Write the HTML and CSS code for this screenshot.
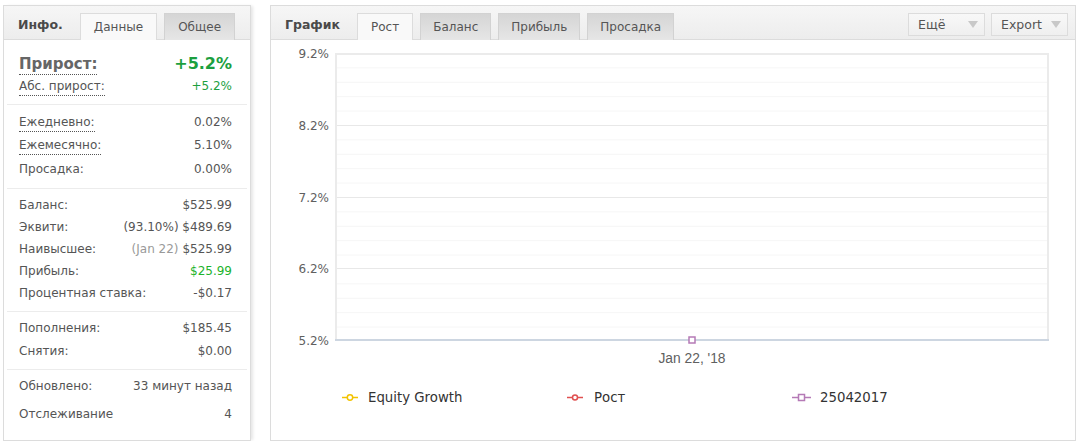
FILE: index.html
```html
<!DOCTYPE html>
<html lang="ru">
<head>
<meta charset="utf-8">
<link rel="stylesheet" href="styles.css">
</head>
<body>
<div class="page">
  <section class="panel info">
    <div class="head">
      <span class="title">Инфо.</span>
      <span class="tab active">Данные</span>
      <span class="tab">Общее</span>
    </div>
    <div class="group first">
      <div class="row big"><span class="lbl dotted">Прирост:</span><span class="val green">+5.2%</span></div>
      <div class="row"><span class="lbl dotted">Абс. прирост:</span><span class="val green">+5.2%</span></div>
    </div>
    <div class="group loose">
      <div class="row"><span class="lbl dotted">Ежедневно:</span><span class="val">0.02%</span></div>
      <div class="row"><span class="lbl dotted">Ежемесячно:</span><span class="val">5.10%</span></div>
      <div class="row"><span class="lbl">Просадка:</span><span class="val">0.00%</span></div>
    </div>
    <div class="group">
      <div class="row"><span class="lbl">Баланс:</span><span class="val">$525.99</span></div>
      <div class="row"><span class="lbl">Эквити:</span><span class="val">(93.10%) $489.69</span></div>
      <div class="row"><span class="lbl">Наивысшее:</span><span class="val"><span class="muted">(Jan 22)</span> $525.99</span></div>
      <div class="row"><span class="lbl">Прибыль:</span><span class="val green2">$25.99</span></div>
      <div class="row"><span class="lbl">Процентная ставка:</span><span class="val">-$0.17</span></div>
    </div>
    <div class="group pair">
      <div class="row"><span class="lbl">Пополнения:</span><span class="val">$185.45</span></div>
      <div class="row"><span class="lbl">Снятия:</span><span class="val">$0.00</span></div>
    </div>
    <div class="group last">
      <div class="row"><span class="lbl">Обновлено:</span><span class="val">33 минут назад</span></div>
      <div class="row tall"><span class="lbl">Отслеживание</span><span class="val">4</span></div>
    </div>
  </section>

  <section class="panel chart">
    <div class="head">
      <span class="title">График</span>
      <span class="tab active">Рост</span>
      <span class="tab">Баланс</span>
      <span class="tab">Прибыль</span>
      <span class="tab">Просадка</span>
      <span class="spacer"></span>
      <span class="btn">Ещё <i class="caret"></i></span>
      <span class="btn">Export <i class="caret"></i></span>
    </div>
    <svg class="plot" width="803" height="399" viewBox="0 0 803 399">
      <rect x="64" y="13" width="713" height="287" fill="#fff"/>
      <g stroke="#f6f6f6" stroke-width="1">
        <line x1="65" x2="776" y1="27.9" y2="27.9"/>
        <line x1="65" x2="776" y1="42.3" y2="42.3"/>
        <line x1="65" x2="776" y1="56.7" y2="56.7"/>
        <line x1="65" x2="776" y1="71.1" y2="71.1"/>
        <line x1="65" x2="776" y1="99.9" y2="99.9"/>
        <line x1="65" x2="776" y1="114.3" y2="114.3"/>
        <line x1="65" x2="776" y1="128.7" y2="128.7"/>
        <line x1="65" x2="776" y1="143.1" y2="143.1"/>
        <line x1="65" x2="776" y1="171.9" y2="171.9"/>
        <line x1="65" x2="776" y1="186.3" y2="186.3"/>
        <line x1="65" x2="776" y1="200.7" y2="200.7"/>
        <line x1="65" x2="776" y1="215.1" y2="215.1"/>
        <line x1="65" x2="776" y1="243.9" y2="243.9"/>
        <line x1="65" x2="776" y1="258.3" y2="258.3"/>
        <line x1="65" x2="776" y1="272.7" y2="272.7"/>
        <line x1="65" x2="776" y1="287.1" y2="287.1"/>
      </g>
      <g stroke="#e8e8e8" stroke-width="1">
        <line x1="65" x2="776" y1="85.5" y2="85.5"/>
        <line x1="65" x2="776" y1="157.5" y2="157.5"/>
        <line x1="65" x2="776" y1="228.5" y2="228.5"/>
      </g>
      <path d="M65 300 V14 H777 V300" fill="none" stroke="#ebebeb" stroke-width="2"/>
      <line x1="64" x2="778" y1="300" y2="300" stroke="#cdd6e1" stroke-width="2"/>
      <g class="ylab" text-anchor="end">
        <text x="58" y="18">9.2%</text>
        <text x="58" y="90">8.2%</text>
        <text x="58" y="162">7.2%</text>
        <text x="58" y="233">6.2%</text>
        <text x="58" y="305">5.2%</text>
      </g>
      <rect x="418" y="297" width="6" height="6" fill="#fff" stroke="#b57ab6" stroke-width="1.5"/>
      <text class="xlab" x="421" y="323" text-anchor="middle">Jan 22, '18</text>
      <g class="legend">
        <line x1="71" x2="87" y1="357.5" y2="357.5" stroke="#f3c300" stroke-width="1.5"/>
        <circle cx="79" cy="357.5" r="2.7" fill="#fff" stroke="#f3c300" stroke-width="1.5"/>
        <text x="97" y="362">Equity Growth</text>
        <line x1="296" x2="312" y1="357.5" y2="357.5" stroke="#e05050" stroke-width="1.5"/>
        <circle cx="304" cy="357.5" r="2.5" fill="#fff" stroke="#e05050" stroke-width="1.5"/>
        <text x="323" y="362">Рост</text>
        <line x1="521" x2="540" y1="357.5" y2="357.5" stroke="#b57ab6" stroke-width="1.5"/>
        <rect x="527.5" y="354.5" width="6" height="6" fill="#fff" stroke="#b57ab6" stroke-width="1.5"/>
        <text x="549" y="362">25042017</text>
      </g>
    </svg>
  </section>
</div>
</body>
</html>
```
FILE: styles.css
```css
* { box-sizing: border-box; }
html, body { margin: 0; padding: 0; background: #fff; }
body { font-family: "DejaVu Sans", Verdana, sans-serif; font-size: 12px; color: #555; }

.page {
  display: flex;
  align-items: flex-start;
  gap: 19px;
  padding: 5px 0 0 3px;
}

.panel {
  border: 1px solid #dcdcdc;
  background: #fff;
}

.info {
  width: 248px;
  height: 436px;
  box-shadow: 3px 0 3px -1px #e6e6e6;
}

.chart {
  width: 806px;
  height: 436px;
}

.head {
  display: flex;
  align-items: flex-end;
  height: 34px;
  padding-left: 14px;
  background: linear-gradient(#f6f6f6, #ededed);
  border-bottom: 1px solid #dcdcdc;
}

.title {
  font-weight: bold;
  color: #4a4a4a;
  font-size: 12.5px;
  align-self: center;
  margin-top: 4px;
  margin-right: 17px;
}

.tab {
  height: 27px;
  line-height: 26px;
  padding: 0 12px;
  margin-right: 7px;
  font-size: 12px;
  color: #555;
  background: linear-gradient(#d5d5d5, #e6e6e6);
  border: 1px solid #d2d2d2;
  border-bottom: none;
  position: relative;
  top: 1px;
}
.tab.active {
  background: #f9f9f9;
  border-color: #dcdcdc;
}

.chart .tab.active { padding: 0 13px; }
.info .title { margin-right: 17px; }
.info .tab { padding: 0 13px; }

.spacer { flex: 1; }

.btn {
  align-self: center;
  margin-top: 4px;
  height: 23px;
  line-height: 21px;
  padding: 0 6px 0 9px;
  margin-right: 6px;
  border: 1px solid #dcdcdc;
  background: linear-gradient(#f8f8f8, #efefef);
  font-size: 12.5px;
  color: #555;
  display: flex;
  align-items: center;
  justify-content: space-between;
  width: 77px;
}
.btn:first-of-type { width: 76px; padding-right: 9px; }
.btn + .btn { margin-right: 7px; }
.caret {
  display: inline-block;
  width: 0; height: 0;
  border-left: 5px solid transparent;
  border-right: 5px solid transparent;
  border-top: 7px solid #c8c8c8;
}

.group {
  margin: 0 3px;
  padding: 5px 15px 7px 12px;
  border-bottom: 1px solid #ececec;
}
.group.first { padding-top: 13px; padding-bottom: 7px; }
.group.loose { padding-top: 6px; }
.group.pair { padding-top: 5px; padding-bottom: 6px; }
.group.last { border-bottom: none; padding-top: 5px; }

.row {
  display: flex;
  justify-content: space-between;
  align-items: baseline;
  height: 22px;
  line-height: 22px;
}
.loose .row { height: 23.3px; line-height: 23px; }
.pair .row { height: 23px; line-height: 23px; }
.row.big .lbl { font-size: 15px; font-weight: bold; color: #666; }
.row.big .val { font-size: 16px; font-weight: bold; }
.row.tall { height: 34px; line-height: 34px; }

.dotted {
  line-height: 1.15;
  border-bottom: 1px dotted #555;
}
.row .lbl.dotted { padding-bottom: 1px; }

.green { color: #1c9f3f; }
.green2 { color: #1db32c; }
.muted { color: #999; }

.plot { display: block; }
.ylab text { font-family: "DejaVu Sans", Verdana, sans-serif; font-size: 12px; fill: #606060; }
.xlab { font-family: "Liberation Sans", Arial, sans-serif; font-size: 13.8px; fill: #606060; }
.legend text { font-family: "DejaVu Sans", Verdana, sans-serif; font-size: 13.3px; fill: #333; }
```
